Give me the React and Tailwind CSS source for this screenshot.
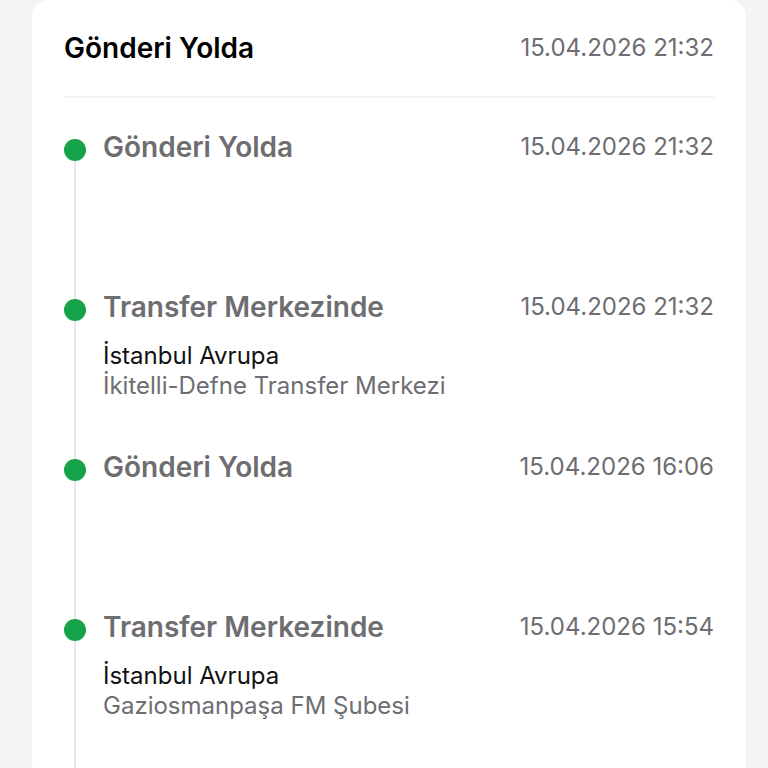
const events = [
  { title: "Gönderi Yolda", date: "15.04.2026 21:32" },
  {
    title: "Transfer Merkezinde",
    date: "15.04.2026 21:32",
    city: "İstanbul Avrupa",
    place: "İkitelli-Defne Transfer Merkezi",
  },
  { title: "Gönderi Yolda", date: "15.04.2026 16:06" },
  {
    title: "Transfer Merkezinde",
    date: "15.04.2026 15:54",
    city: "İstanbul Avrupa",
    place: "Gaziosmanpaşa FM Şubesi",
  },
];

function TimelineItem({ item, first, last }) {
  return (
    <div className={`flex gap-[17px] ${last ? "h-[200px]" : "h-[160px]"}`}>
      <div className="flex w-[22px] shrink-0 flex-col items-center">
        <div className={`h-[41px] w-[2px] ${first ? "bg-transparent" : "bg-[#e5e7eb]"}`} />
        <div className="h-[22px] w-[22px] rounded-full bg-[#16a34a]" />
        <div className="w-[2px] flex-1 bg-[#e5e7eb]" />
      </div>
      <div className="flex-1 pt-[33px]">
        <div className="flex items-center justify-between">
          <span className="text-[28px] font-semibold leading-8 text-[#6d6d72]">
            {item.title}
          </span>
          <span className="text-[24px] leading-8 text-[#6d6d72]">{item.date}</span>
        </div>
        {item.city && (
          <div className="mt-[18px]">
            <p className="text-[24px] leading-[30px] text-[#111]">{item.city}</p>
            <p className="text-[24px] leading-[30px] text-[#6d6d72]">{item.place}</p>
          </div>
        )}
      </div>
    </div>
  );
}

export default function App() {
  return (
    <div
      className="h-[768px] overflow-hidden bg-[#f3f4f6] pl-8 pr-[22px]"
      style={{ fontFamily: "Inter, 'Noto Sans', sans-serif" }}
    >
      <div className="rounded-2xl bg-white px-8">
        <div className="flex h-[98px] items-center justify-between border-b-2 border-[#f3f4f6]">
          <h2 className="text-[28px] font-semibold text-black">Gönderi Yolda</h2>
          <span className="text-[24px] text-[#6d6d72]">15.04.2026 21:32</span>
        </div>
        <div>
          {events.map((e, i) => (
            <TimelineItem
              key={i}
              item={e}
              first={i === 0}
              last={i === events.length - 1}
            />
          ))}
        </div>
      </div>
    </div>
  );
}
